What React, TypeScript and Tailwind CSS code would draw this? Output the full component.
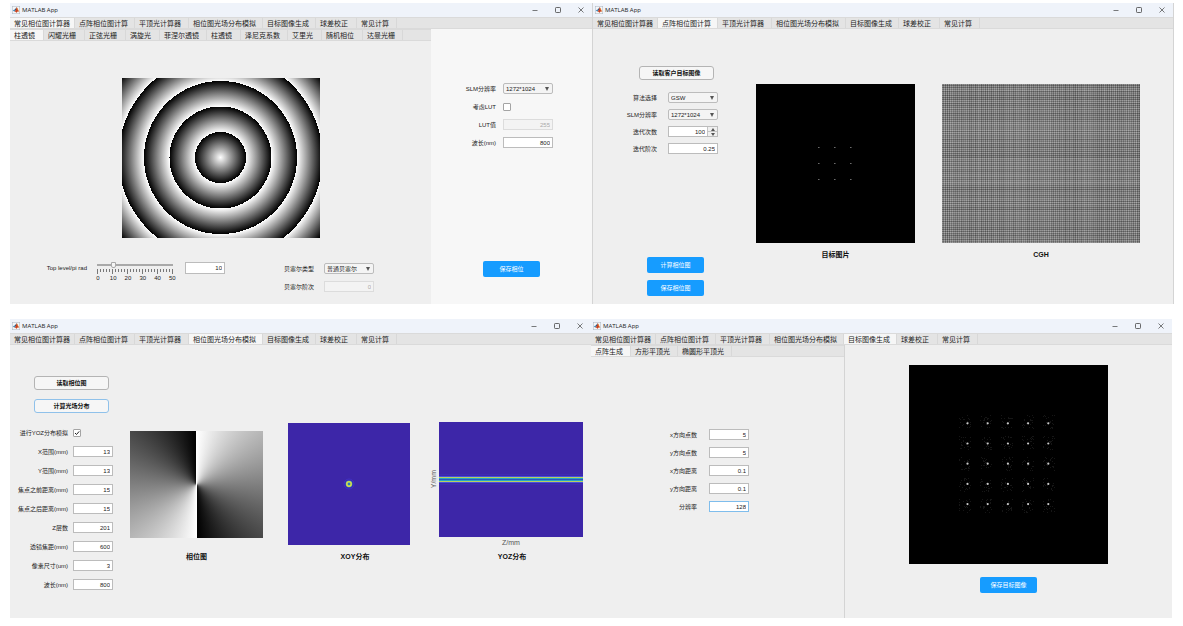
import React, { useId } from 'react';
import clsx from 'clsx';

type TabItem = { text: string; width: string };

const MAIN_TABS: TabItem[] = [
    { text: '常见相位图计算器', width: 'w-[65px]' },
    { text: '点阵相位图计算', width: 'w-[60px]' },
    { text: '平顶光计算器', width: 'w-[54px]' },
    { text: '相位图光场分布模拟', width: 'w-[74px]' },
    { text: '目标图像生成', width: 'w-[53px]' },
    { text: '球差校正', width: 'w-[41px]' },
    { text: '常见计算', width: 'w-[40px]' },
];

const PHASE_TABS: TabItem[] = [
    { text: '柱透镜', width: 'w-[34px]' },
    { text: '闪耀光栅', width: 'w-[41px]' },
    { text: '正弦光栅', width: 'w-[41px]' },
    { text: '涡旋光', width: 'w-[34px]' },
    { text: '菲涅尔透镜', width: 'w-[47px]' },
    { text: '柱透镜', width: 'w-[34px]' },
    { text: '泽尼克系数', width: 'w-[47px]' },
    { text: '艾里光', width: 'w-[34px]' },
    { text: '随机相位', width: 'w-[41px]' },
    { text: '达曼光栅', width: 'w-[40px]' },
];

const TARGET_TABS: TabItem[] = [
    { text: '点阵生成', width: 'w-[40px]' },
    { text: '方形平顶光', width: 'w-[47px]' },
    { text: '椭圆形平顶光', width: 'w-[54px]' },
];

function MatlabIcon() {
    return (
        <svg viewBox="0 0 16 16" className="h-2 w-2" aria-hidden="true">
            <rect x="0.5" y="0.5" width="15" height="15" fill="#f4f6f8" stroke="#a9b4c0" />
            <path d="M1.5 9 L5 7 L7.5 9.5 L4.5 11 Z" fill="#3f87b8" />
            <path d="M5 7 C7 6.5 7.5 3 9.5 2.5 L8 9 Z" fill="#235a86" />
            <path d="M9.5 2.5 C11 3.5 12 8 14.5 12 C12.5 10.5 11 11 8.5 14 C8 11.5 6.5 11 4.5 11 C7.5 9.5 8.5 5 9.5 2.5 Z" fill="#c8401f" />
            <path d="M9.5 2.5 C11 3.5 12 8 14.5 12 C12 10 11 8 9.5 2.5 Z" fill="#f0a040" />
        </svg>
    );
}

function TitleBar() {
    return (
        <header className="flex h-[14px] items-center bg-[#eff3fa] pl-0.5 text-[#222]">
            <MatlabIcon />
            <span className="ml-0.5 flex-1 font-['Open_Sans',sans-serif] text-[6px] leading-none">MATLAB App</span>
            <button type="button" aria-label="Minimize" className="flex w-[23px] justify-center">
                <svg viewBox="0 0 6 6" className="h-1.5 w-1.5"><path d="M0.5 3.5 H5.5" stroke="#444" strokeWidth="0.7" /></svg>
            </button>
            <button type="button" aria-label="Maximize" className="flex w-[23px] justify-center">
                <svg viewBox="0 0 6 6" className="h-1.5 w-1.5"><rect x="0.5" y="0.5" width="5" height="5" rx="0.8" fill="none" stroke="#444" strokeWidth="0.8" /></svg>
            </button>
            <button type="button" aria-label="Close" className="flex w-[23px] justify-center">
                <svg viewBox="0 0 6 6" className="h-1.5 w-1.5"><path d="M0.5 0.5 L5.5 5.5 M5.5 0.5 L0.5 5.5" stroke="#444" strokeWidth="0.7" /></svg>
            </button>
        </header>
    );
}

function TabBar({ items, active }: { items: TabItem[]; active: number }) {
    return (
        <div role="tablist" className="flex h-3 border-y border-[#dadada] bg-[#e4e4e4]">
            {items.map((t, i) => (
                <button
                    key={i}
                    type="button"
                    role="tab"
                    aria-selected={i === active}
                    className={clsx(
                        'shrink-0 border-r border-[#d8d8d8] pl-1 text-left text-[7px] leading-none whitespace-nowrap text-[#222]',
                        t.width,
                        i === active && 'bg-[#f6f6f6]',
                    )}
                >
                    {t.text}
                </button>
            ))}
        </div>
    );
}

function AppWindow({ active, className, children }: { active: number; className?: string; children: React.ReactNode }) {
    return (
        <section className={clsx('flex min-w-0 flex-col bg-[#efefef]', className)}>
            <TitleBar />
            <TabBar items={MAIN_TABS} active={active} />
            <div className="flex flex-1">{children}</div>
        </section>
    );
}

type FieldProps = { label: string; value: string; disabled?: boolean; focused?: boolean };

const labelClass = 'text-right text-[6px] leading-none whitespace-nowrap text-[#222]';

function NumberField({ label, value, disabled, focused }: FieldProps) {
    const id = useId();
    return (
        <>
            <label htmlFor={id} className={labelClass}>{label}</label>
            <input
                id={id}
                type="text"
                inputMode="decimal"
                defaultValue={value}
                disabled={disabled}
                className={clsx(
                    'h-[11px] w-full border px-0.5 text-right text-[6px] leading-none',
                    disabled ? 'border-[#dcdcdc] bg-[#f3f3f3] text-[#aaa]' : 'bg-white text-[#222]',
                    !disabled && (focused ? 'border-[#7fbdec]' : 'border-[#bcbcbc]'),
                )}
            />
        </>
    );
}

function SelectField({ label, value }: FieldProps) {
    const id = useId();
    return (
        <>
            <label htmlFor={id} className={labelClass}>{label}</label>
            <div className="relative h-[11px]">
                <select id={id} className="block h-[11px] w-full appearance-none rounded-xs border border-[#bcbcbc] bg-[#f4f4f4] pl-0.5 text-[6px] leading-none text-[#222]">
                    <option>{value}</option>
                </select>
                <svg viewBox="0 0 4 4" className="pointer-events-none absolute top-1 right-1 h-1 w-1"><path d="M0 0 H4 L2 4 Z" fill="#555" /></svg>
            </div>
        </>
    );
}

function CheckField({ label, checked }: { label: string; checked?: boolean }) {
    const id = useId();
    return (
        <>
            <label htmlFor={id} className={labelClass}>{label}</label>
            <div className="grid h-[11px] w-2 items-center">
                <input id={id} type="checkbox" defaultChecked={checked} className="peer col-start-1 row-start-1 h-2 w-2 appearance-none rounded-[1px] border border-[#a4a4a4] bg-white" />
                <svg viewBox="0 0 8 8" className="pointer-events-none col-start-1 row-start-1 hidden h-2 w-2 peer-checked:block"><path d="M2 4 L3.5 5.5 L6.2 2.4" fill="none" stroke="#222" /></svg>
            </div>
        </>
    );
}

function SpinnerField({ label, value }: FieldProps) {
    const id = useId();
    return (
        <>
            <label htmlFor={id} className={labelClass}>{label}</label>
            <div className="flex h-[11px] border border-[#bcbcbc] bg-white">
                <input id={id} type="text" inputMode="numeric" defaultValue={value} className="min-w-0 flex-1 pr-0.5 text-right text-[6px] leading-none text-[#222]" />
                <div className="flex w-[10px] flex-col border-l border-[#c4c4c4] bg-[#f0f0f0]">
                    <button type="button" aria-label="增加" className="flex flex-1 items-center justify-center border-b border-[#c4c4c4]">
                        <svg viewBox="0 0 4 3" className="h-[3px] w-1"><path d="M0 3 H4 L2 0 Z" fill="#555" /></svg>
                    </button>
                    <button type="button" aria-label="减少" className="flex flex-1 items-center justify-center">
                        <svg viewBox="0 0 4 3" className="h-[3px] w-1"><path d="M0 0 H4 L2 3 Z" fill="#555" /></svg>
                    </button>
                </div>
            </div>
        </>
    );
}

function PrimaryButton({ children, className }: { children: React.ReactNode; className?: string }) {
    return (
        <button type="button" className={clsx('block h-4 w-[57px] rounded-xs bg-[#169cff] text-[6px] leading-none text-white', className)}>
            {children}
        </button>
    );
}

function PlainButton({ children, focused }: { children: React.ReactNode; focused?: boolean }) {
    return (
        <button
            type="button"
            className={clsx(
                'block h-[14px] w-[75px] rounded-[3px] border bg-[#f6f6f6] text-[6px] leading-none font-bold text-[#111]',
                focused ? 'border-[#8fc1ea]' : 'border-[#b4b4b4]',
            )}
        >
            {children}
        </button>
    );
}

function Caption({ children, className }: { children: React.ReactNode; className?: string }) {
    return <figcaption className={clsx('h-[10px] text-center text-[7px] leading-[10px] font-bold text-[#111]', className)}>{children}</figcaption>;
}

// small deterministic generator so the hologram and noise look the same on every render
function makeRandom(seed: number) {
    let s = seed;
    return () => {
        s = (s * 16807) % 2147483647;
        return s / 2147483647;
    };
}

function BesselPhase() {
    return (
        <svg viewBox="0 0 198 160" className="mx-auto block h-[160px] w-[198px]">
            <defs>
                <radialGradient id="bessel" gradientUnits="userSpaceOnUse" cx="98.5" cy="79.5" r="25.5" spreadMethod="repeat">
                    <stop offset="0" stopColor="#fff" />
                    <stop offset="1" stopColor="#000" />
                </radialGradient>
            </defs>
            <rect width="198" height="160" fill="url(#bessel)" />
        </svg>
    );
}

function Hologram() {
    const rnd = makeRandom(41);
    const stripe = (i: number) => {
        const r = rnd();
        if (i % 2 === 0) return { fill: '#fff', opacity: 0.04 + r * 0.14 };
        return { fill: '#000', opacity: 0.06 + r * 0.18 };
    };
    const cols = Array.from({ length: 198 }, (_, i) => stripe(i));
    const rows = Array.from({ length: 159 }, (_, i) => stripe(i));
    return (
        <svg viewBox="0 0 198 159" className="block h-[159px] w-[198px]" shapeRendering="crispEdges">
            <rect width="198" height="159" fill="#858585" />
            {cols.map((c, i) => <rect key={i} x={i} width="1" height="159" fill={c.fill} opacity={c.opacity} />)}
            {rows.map((r, i) => <rect key={i} y={i} width="198" height="1" fill={r.fill} opacity={r.opacity} />)}
        </svg>
    );
}

function SpotTarget() {
    return (
        <svg viewBox="0 0 159 159" className="block h-[159px] w-[159px]" shapeRendering="crispEdges">
            <rect width="159" height="159" fill="#000" />
            {[62, 78, 94].map((x) => [63, 79, 95].map((y) => (
                <g key={`${x}-${y}`}>
                    <rect x={x} y={y} width="1" height="1" fill="#6c6c6c" />
                    <rect x={x + 1} y={y} width="1" height="1" fill="#3c3c3c" />
                </g>
            )))}
        </svg>
    );
}

function SpotArray() {
    const rnd = makeRandom(7);
    const steps = [0, 1, 2, 3, 4];
    const noise = steps.flatMap((r) => steps.flatMap((c) => Array.from({ length: 22 }, () => ({
        x: 50 + c * 21 + Math.floor(rnd() * 12),
        y: 50 + r * 21 + Math.floor(rnd() * 14),
    }))));
    return (
        <svg viewBox="0 0 199 199" className="mx-auto block h-[199px] w-[199px]">
            <rect width="199" height="199" fill="#000" />
            {noise.map((n, i) => <rect key={i} x={n.x} y={n.y} width="1" height="1" fill="#161616" />)}
            {steps.map((r) => steps.map((c) => (
                <circle key={`${r}-${c}`} cx={58.5 + c * 20.2} cy={58.3 + r * 20.2} r="1.1" fill="#c8c8c8" />
            )))}
        </svg>
    );
}

function XoyPlot() {
    return (
        <svg viewBox="0 0 122 122" className="block h-[122px] w-[122px]">
            <rect width="122" height="122" fill="#3d26a8" />
            <circle cx="61" cy="61" r="5" fill="none" stroke="#4030c4" strokeWidth="1" />
            <circle cx="61" cy="61" r="3.4" fill="#2f8fd0" />
            <circle cx="61" cy="61" r="2.2" fill="none" stroke="#dfe03c" strokeWidth="1.5" />
            <circle cx="61" cy="61" r="1.1" fill="#2b7bb8" />
        </svg>
    );
}

function YozPlot() {
    const bands = [
        { y: 52, color: '#4029b4' },
        { y: 54, color: '#4450e0' },
        { y: 55, color: '#b8d060' },
        { y: 56, color: '#26a5c4' },
        { y: 57, color: '#2c56bc' },
        { y: 58, color: '#26a5c4' },
        { y: 59, color: '#b8d060' },
        { y: 60, color: '#4450e0' },
        { y: 62, color: '#4029b4' },
    ];
    return (
        <svg viewBox="0 0 144 115" className="block h-[115px] w-[144px]" shapeRendering="crispEdges">
            <rect width="144" height="115" fill="#3d26a8" />
            {bands.map((b) => <rect key={b.y} y={b.y} width="144" height="1" fill={b.color} />)}
        </svg>
    );
}

function LevelSlider() {
    const id = useId();
    const ticks = Array.from({ length: 26 }, (_, i) => i);
    return (
        <>
            <label htmlFor={id} className="mt-[3px] w-[77px] text-right text-[6px] leading-none text-[#222]">Top level/pi rad</label>
            <div className="ml-2 w-[80px]">
                <input
                    id={id}
                    type="range"
                    min="0"
                    max="50"
                    defaultValue="10"
                    className="mx-auto block h-1.5 w-[76px] appearance-none bg-[linear-gradient(#a9a9a9,#a9a9a9)] bg-[length:100%_2px] bg-center bg-no-repeat [&::-webkit-slider-thumb]:h-1.5 [&::-webkit-slider-thumb]:w-[5px] [&::-webkit-slider-thumb]:appearance-none [&::-webkit-slider-thumb]:rounded-b-xs [&::-webkit-slider-thumb]:border [&::-webkit-slider-thumb]:border-[#aaa] [&::-webkit-slider-thumb]:bg-[#f6f6f6]"
                />
                <svg viewBox="0 0 76 5" className="mx-auto mt-px block h-[5px] w-[76px]" shapeRendering="crispEdges">
                    {ticks.map((i) => <rect key={i} x={i * 3} width="1" height={i % 5 === 0 ? 5 : 3} fill="#777" />)}
                </svg>
                <div className="mt-px flex justify-between text-center text-[6px] leading-none text-[#222]">
                    {[0, 10, 20, 30, 40, 50].map((n) => <span key={n} className="w-[6px]">{n}</span>)}
                </div>
            </div>
        </>
    );
}

function PhaseWindow() {
    return (
        <AppWindow active={0}>
            <div className="flex-1">
                <TabBar items={PHASE_TABS} active={0} />
                <div className="pt-[37px]">
                    <BesselPhase />
                    <div className="mt-6 flex items-start">
                        <LevelSlider />
                        <input type="text" aria-label="Top level" defaultValue="10" className="ml-[10px] h-3 w-10 border border-[#bcbcbc] bg-white pr-0.5 text-right text-[6px] leading-none text-[#222]" />
                        <div className="ml-[59px] grid grid-cols-[30px_50px] items-center gap-x-[10px] gap-y-[7px] pt-px">
                            <SelectField label="贝塞尔类型" value="普通贝塞尔" />
                            <NumberField label="贝塞尔阶次" value="0" disabled />
                        </div>
                    </div>
                </div>
            </div>
            <aside className="w-[161px] bg-[#f7f7f7] pt-[54px] pb-[27px]">
                <div className="grid grid-cols-[65px_50px] items-center gap-x-[7px] gap-y-[7px]">
                    <SelectField label="SLM分辨率" value="1272*1024" />
                    <CheckField label="考虑LUT" />
                    <NumberField label="LUT值" value="255" disabled />
                    <NumberField label="波长(nm)" value="800" />
                </div>
                <PrimaryButton className="mx-auto mt-[113px]">保存相位</PrimaryButton>
            </aside>
        </AppWindow>
    );
}

function LatticeWindow() {
    return (
        <AppWindow active={1} className="border-x border-[#d4d4d4]">
            <div className="w-[163px] pt-[37px] pb-[7px]">
                <div className="pl-[46px]">
                    <PlainButton>读取客户目标图像</PlainButton>
                </div>
                <div className="mt-3 grid grid-cols-[64px_50px] items-center gap-x-[11px] gap-y-1.5">
                    <SelectField label="算法选择" value="GSW" />
                    <SelectField label="SLM分辨率" value="1272*1024" />
                    <SpinnerField label="迭代次数" value="100" />
                    <NumberField label="迭代阶次" value="0.25" />
                </div>
                <div className="mt-[103px] flex flex-col gap-[7px] pl-[54px]">
                    <PrimaryButton>计算相位图</PrimaryButton>
                    <PrimaryButton>保存相位图</PrimaryButton>
                </div>
            </div>
            <div className="flex items-start gap-[27px] pt-[55px]">
                <figure>
                    <SpotTarget />
                    <Caption className="mt-[7px]">目标图片</Caption>
                </figure>
                <figure>
                    <Hologram />
                    <Caption className="mt-[7px]">CGH</Caption>
                </figure>
            </div>
        </AppWindow>
    );
}

function FieldWindow() {
    return (
        <AppWindow active={3}>
            <div className="w-[120px] pt-[31px] pb-7">
                <div className="flex flex-col gap-[9px] pl-6">
                    <PlainButton>读取相位图</PlainButton>
                    <PlainButton focused>计算光场分布</PlainButton>
                </div>
                <div className="mt-[14px] grid grid-cols-[58px_40px] items-center gap-x-[5px] gap-y-2">
                    <CheckField label="进行YOZ分布模拟" checked />
                    <NumberField label="X范围(mm)" value="13" />
                    <NumberField label="Y范围(mm)" value="13" />
                    <NumberField label="焦点之前距离(mm)" value="15" />
                    <NumberField label="焦点之后距离(mm)" value="15" />
                    <NumberField label="Z层数" value="201" />
                    <NumberField label="透镜焦距(mm)" value="600" />
                    <NumberField label="像素尺寸(um)" value="3" />
                    <NumberField label="波长(nm)" value="800" />
                </div>
            </div>
            <div className="flex items-end self-start pt-[77px]">
                <figure>
                    <div className="h-[107px] w-[133px] bg-[conic-gradient(#fff_0deg,#000_180deg,#fff_180deg,#000_360deg)]" />
                    <Caption className="mt-[14px]">相位图</Caption>
                </figure>
                <figure className="ml-[25px]">
                    <XoyPlot />
                    <Caption className="mt-[7px] pl-3">XOY分布</Caption>
                </figure>
                <figure className="ml-[19px]">
                    <div className="flex items-center">
                        <span className="w-[10px] rotate-180 text-[7px] leading-[10px] text-[#555] [writing-mode:vertical-rl]">Y/mm</span>
                        <YozPlot />
                    </div>
                    <p className="mt-px h-[10px] pl-[10px] text-center text-[7px] leading-[10px] text-[#555]">Z/mm</p>
                    <Caption className="mt-1 pl-3">YOZ分布</Caption>
                </figure>
            </div>
        </AppWindow>
    );
}

function TargetWindow() {
    return (
        <AppWindow active={4}>
            <div className="w-[254px] border-r border-[#d4d4d4]">
                <TabBar items={TARGET_TABS} active={0} />
                <div className="grid grid-cols-[106px_40px] items-center gap-x-3 gap-y-[7px] pt-[72px]">
                    <NumberField label="x方向点数" value="5" />
                    <NumberField label="y方向点数" value="5" />
                    <NumberField label="x方向距离" value="0.1" />
                    <NumberField label="y方向距离" value="0.1" />
                    <NumberField label="分辨率" value="128" focused />
                </div>
            </div>
            <div className="flex-1 pt-5 pb-[25px]">
                <SpotArray />
                <PrimaryButton className="mx-auto mt-[13px]">保存目标图像</PrimaryButton>
            </div>
        </AppWindow>
    );
}

export default function App() {
    return (
        <main className="flex flex-col gap-[15px] bg-white pt-[3px] pr-[9px] pb-2 pl-[10px] font-['Liberation_Sans','Noto_Sans_CJK_SC',sans-serif]">
            <div className="grid grid-cols-2">
                <PhaseWindow />
                <LatticeWindow />
            </div>
            <div className="mr-0.5 grid grid-cols-2">
                <FieldWindow />
                <TargetWindow />
            </div>
        </main>
    );
}
